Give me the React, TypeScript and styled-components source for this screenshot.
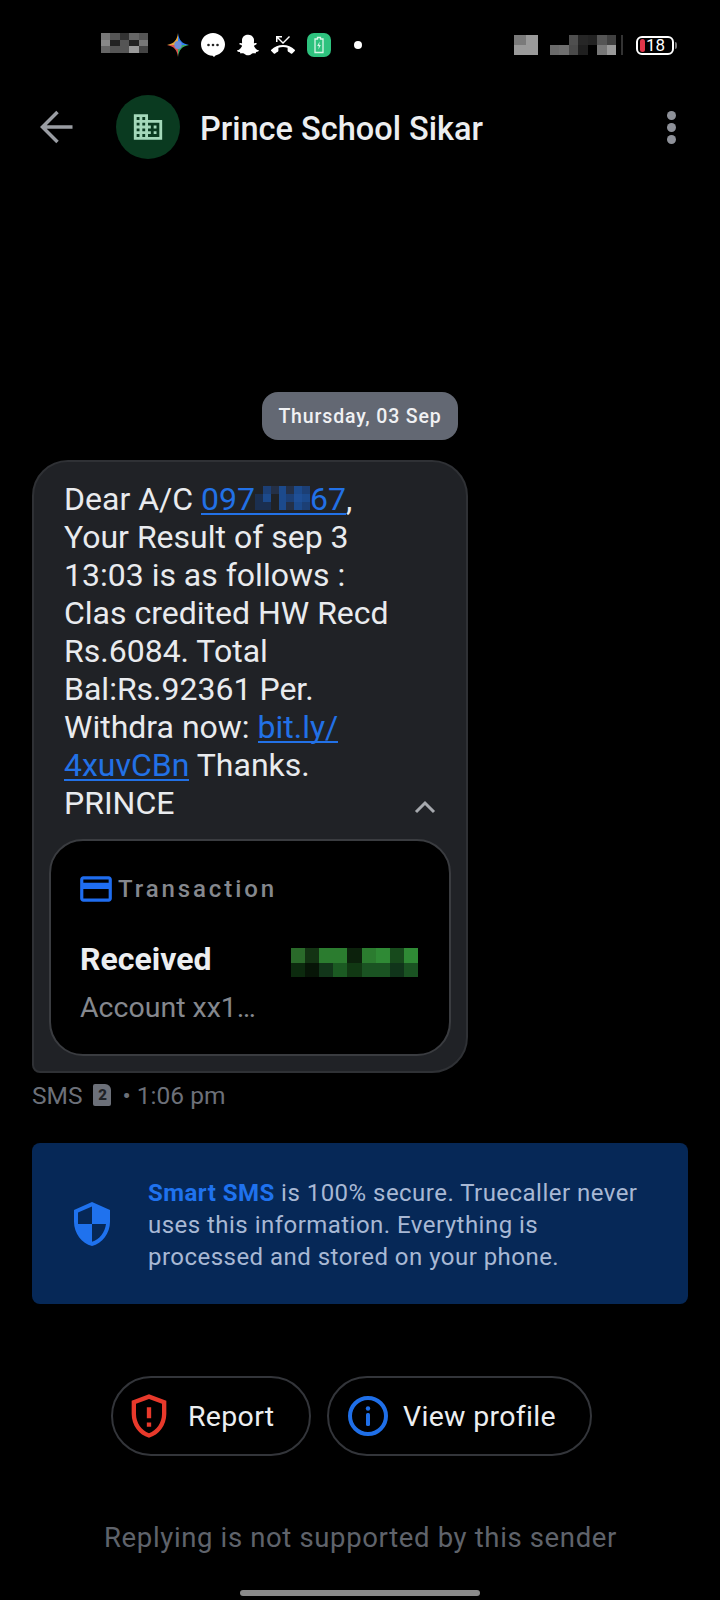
import React from 'react';
import { createGlobalStyle, styled } from 'styled-components';
import { FaSnapchatGhost } from 'react-icons/fa';

const GlobalStyle = createGlobalStyle`
  html, body {
    margin: 0;
    padding: 0;
    background: #000;
  }
  body {
    font-family: Roboto, "Liberation Sans", sans-serif;
  }
`;

const Screen = styled.div`
  width: 720px;
  height: 1600px;
  background: #000;
  display: flex;
  flex-direction: column;
  overflow: hidden;
  color: #e8eaed;
`;

const StatusBar = styled.div`
  height: 90px;
  box-sizing: border-box;
  padding: 33px 46px 0 101px;
  display: flex;
  align-items: flex-start;
`;

const StatusIcons = styled.div`
  display: flex;
  align-items: center;
  height: 24px;
  margin-left: 19px;
  gap: 12px;
`;

const StatusDot = styled.span`
  width: 8px;
  height: 8px;
  border-radius: 50%;
  background: #fff;
  margin-left: 11px;
`;

const StatusRight = styled.div`
  margin-left: auto;
  display: flex;
  align-items: center;
  height: 24px;
  gap: 12px;
`;

const SignalGroup = styled.div`
  display: flex;
  align-items: center;
`;

const SignalDivider = styled.span`
  width: 2px;
  height: 20px;
  background: #333;
  margin: 0 1px 0 5px;
`;

const BatteryShell = styled.div`
  position: relative;
  width: 38px;
  height: 19px;
  box-sizing: border-box;
  border: 2px solid #fff;
  border-radius: 6px;
  display: flex;
  align-items: center;
  padding-left: 2px;
  gap: 1px;
  &::after {
    content: '';
    position: absolute;
    right: -5px;
    top: 4px;
    width: 2px;
    height: 7px;
    background: #777;
    border-radius: 0 2px 2px 0;
  }
`;

const BatteryLevel = styled.span`
  width: 5px;
  height: 13px;
  border-radius: 3px;
  background: #e0364a;
`;

const BatteryText = styled.span`
  font-size: 17px;
  line-height: 15px;
  color: #fff;
`;

const Header = styled.header`
  height: 74px;
  display: flex;
  align-items: center;
  padding: 0 44px 0 36px;
`;

const BackButton = styled.button`
  width: 40px;
  height: 40px;
  padding: 0;
  border: 0;
  background: none;
  color: #9a9da3;
  display: flex;
  align-items: center;
  justify-content: center;
`;

const Avatar = styled.div`
  width: 64px;
  height: 64px;
  margin-left: 40px;
  border-radius: 50%;
  background: #0a3a20;
  display: flex;
  align-items: center;
  justify-content: center;
  flex-shrink: 0;
`;

const Title = styled.h1`
  margin: 0 0 0 20px;
  padding-top: 3px;
  font-size: 32.5px;
  font-weight: 500;
  line-height: 40px;
  color: #eceef0;
  flex: 1;
`;

const MoreButton = styled.div`
  display: flex;
  flex-direction: column;
  gap: 3px;
`;

const MoreDot = styled.span`
  width: 9px;
  height: 9px;
  border-radius: 50%;
  background: #8e9199;
`;

const Thread = styled.main`
  flex: 1;
  display: flex;
  flex-direction: column;
  padding: 228px 32px 0;
`;

const DatePill = styled.div`
  align-self: center;
  height: 48px;
  box-sizing: border-box;
  padding: 0 16px;
  border-radius: 16px;
  background: #636873;
  color: #f0f1f3;
  font-size: 19.5px;
  font-weight: 500;
  letter-spacing: 0.85px;
  display: flex;
  align-items: center;
`;

const Bubble = styled.article`
  width: 436px;
  margin-top: 20px;
  box-sizing: border-box;
  padding: 18px 15px 15px;
  background: #202226;
  border: 2px solid #2f3135;
  border-radius: 36px 36px 36px 8px;
`;

const MessageRow = styled.div`
  display: flex;
  align-items: flex-end;
  padding-left: 15px;
`;

const MessageText = styled.p`
  margin: 0;
  width: 335px;
  font-size: 32px;
  line-height: 38px;
  color: #e9ebee;
`;

const MessageLink = styled.a`
  color: #2271e6;
  background: linear-gradient(#2271e6, #2271e6) no-repeat left calc(100% - 3px) / 100% 2px;
`;

const Chevron = styled.span`
  color: #a6a9ae;
  margin: 0 0 8px 14px;
  display: flex;
`;

const SmartCard = styled.section`
  margin-top: 17px;
  height: 217px;
  box-sizing: border-box;
  padding: 35px 31px 0 29px;
  background: #000;
  border: 2px solid #3a3c40;
  border-radius: 34px;
`;

const CardLabel = styled.div`
  display: flex;
  align-items: center;
  gap: 3px;
  margin-left: -3px;
  height: 26px;
  color: #85888e;
  font-size: 24px;
  font-weight: 500;
  letter-spacing: 2.9px;
`;

const CardRow = styled.div`
  margin-top: 39px;
  display: flex;
  align-items: center;
  justify-content: space-between;
  height: 36px;
`;

const CardTitle = styled.span`
  font-size: 32px;
  font-weight: 700;
  color: #eceef0;
`;

const AmountBlock = styled.div`
  margin-top: 6px;
  display: flex;
`;

const CardSubtitle = styled.div`
  margin-top: 13px;
  font-size: 28.5px;
  line-height: 36px;
  color: #85888e;
`;

const Meta = styled.div`
  margin-top: 7px;
  height: 30px;
  display: flex;
  align-items: center;
  gap: 11px;
  font-size: 24.5px;
  color: #6c7079;
`;

const SimBadge = styled.span`
  width: 18px;
  height: 22px;
  background: #6c7079;
  color: #202226;
  border-radius: 2px 6px 2px 2px;
  font-size: 15px;
  font-weight: 900;
  display: flex;
  align-items: center;
  justify-content: center;
`;

const InfoBanner = styled.aside`
  margin-top: 33px;
  height: 161px;
  box-sizing: border-box;
  padding: 0 30px 0 36px;
  border-radius: 8px;
  background: #062857;
  display: flex;
  align-items: center;
  gap: 32px;
`;

const BannerText = styled.p`
  margin: 0;
  padding-top: 3px;
  font-size: 24px;
  line-height: 32px;
  letter-spacing: 0.47px;
  color: #a8b8d4;
`;

const BannerAccent = styled.strong`
  color: #1f72ee;
  font-weight: 700;
`;

const Actions = styled.div`
  margin-top: 72px;
  padding-left: 79px;
  display: flex;
  gap: 16px;
`;

const ActionButton = styled.button<{ $width: number; $inset: number; $gap: number }>`
  width: ${p => p.$width}px;
  height: 80px;
  box-sizing: border-box;
  padding: 0 0 0 ${p => p.$inset}px;
  border: 2px solid #33353a;
  border-radius: 40px;
  background: none;
  color: #eceef0;
  font-family: inherit;
  font-size: 28.5px;
  letter-spacing: 0.3px;
  display: flex;
  align-items: center;
  gap: ${p => p.$gap}px;
`;

const ReplyHint = styled.div`
  margin-top: 64px;
  margin-left: 1px;
  text-align: center;
  font-size: 27.5px;
  line-height: 36px;
  letter-spacing: 0.64px;
  color: #5f636b;
`;

const HomeBar = styled.div`
  align-self: center;
  width: 240px;
  height: 6px;
  margin-bottom: 4px;
  border-radius: 3px;
  background: #8a8a8a;
`;

// Blocks out private values with a grid of flat colour cells
const Mosaic = ({ cells, size, cols }: { cells: string[]; size: [number, number]; cols: number }) => {
  const rows = Math.ceil(cells.length / cols);
  const w = size[0] / cols;
  const h = size[1] / rows;
  return (
    <svg width={size[0]} height={size[1]} style={{ display: 'inline-block', flexShrink: 0 }} shapeRendering="crispEdges">
      {cells.map((fill, i) => (
        <rect key={i} x={(i % cols) * w} y={Math.floor(i / cols) * h} width={w + 0.5} height={h + 0.5} fill={fill} />
      ))}
    </svg>
  );
};

const Gem = () => (
  <svg width="22" height="24" viewBox="0 0 24 24" preserveAspectRatio="none">
    <defs>
      <clipPath id="gem">
        <path d="M12 0C13 7 16 10.5 24 12 16 13.5 13 17 12 24 11 17 8 13.5 0 12 8 10.5 11 7 12 0Z" />
      </clipPath>
    </defs>
    <g clipPath="url(#gem)">
      <rect x="0" y="0" width="12" height="12" fill="#e8a83a" />
      <rect x="12" y="0" width="12" height="12" fill="#2f7ff5" />
      <rect x="0" y="12" width="12" height="12" fill="#e0524d" />
      <rect x="12" y="12" width="12" height="12" fill="#3aa864" />
      <circle cx="12" cy="12" r="4" fill="#6f8fd8" />
    </g>
  </svg>
);

const ChatBubble = () => (
  <svg width="24" height="24" viewBox="0 0 24 24">
    <path d="M12 0C18.6 0 24 5 24 11.3 24 17 20 21 14.5 22.6L13 24 11.6 22.8C5 22.4 0 17.6 0 11.3 0 5 5.4 0 12 0Z" fill="#fff" />
    <circle cx="7.5" cy="12" r="1.3" fill="#222" />
    <circle cx="12" cy="12" r="1.3" fill="#222" />
    <circle cx="16.5" cy="12" r="1.3" fill="#222" />
  </svg>
);

const MissedCall = () => (
  <svg width="24" height="24" viewBox="0 0 24 24" fill="#fff">
    <path d="M6.5 5.5L12 11l7-7-1-1-6 6-4.5-4.5H11V3H5v6h1.5V5.5zm17.21 11.17C20.66 13.78 16.54 12 12 12 7.46 12 3.34 13.78.29 16.67c-.18.18-.29.43-.29.71s.11.53.29.71l2.48 2.48c.18.18.43.29.71.29.27 0 .52-.11.7-.28.79-.74 1.69-1.36 2.66-1.85.33-.16.56-.5.56-.9v-3.1c1.45-.48 3-.73 4.6-.73s3.15.25 4.6.72v3.1c0 .39.23.74.56.9.98.49 1.87 1.12 2.67 1.85.18.18.43.28.7.28.28 0 .53-.11.71-.29l2.48-2.48c.18-.18.29-.43.29-.71s-.12-.52-.3-.7z" />
  </svg>
);

const ChargingBadge = () => (
  <svg width="24" height="24" viewBox="0 0 24 24">
    <rect width="24" height="24" rx="7" fill="#2ec27e" />
    <path d="M10.5 4.5h3v1.5h2.5v13.5H8V6h2.5Z" fill="none" stroke="#d8f5e6" strokeWidth="1.3" />
    <path d="M12.6 8.5 10.2 13h1.6l-.4 3.5 2.4-4.5h-1.6Z" fill="#d8f5e6" />
  </svg>
);

const BuildingIcon = () => (
  <svg width="34" height="34" viewBox="0 0 24 24" fill="#a4d8ba">
    <path d="M12 7V3H2v18h20V7H12zM6 19H4v-2h2v2zm0-4H4v-2h2v2zm0-4H4V9h2v2zm0-4H4V5h2v2zm4 12H8v-2h2v2zm0-4H8v-2h2v2zm0-4H8V9h2v2zm0-4H8V5h2v2zm10 12h-8v-2h2v-2h-2v-2h2v-2h-2V9h8v10zm-2-8h-2v2h2v-2zm0 4h-2v2h2v-2z" />
  </svg>
);

const CardIcon = () => (
  <svg width="38" height="38" viewBox="0 0 24 24" fill="#1f6df0">
    <path d="M20 4H4c-1.11 0-1.99.89-1.99 2L2 18c0 1.11.89 2 2 2h16c1.11 0 2-.89 2-2V6c0-1.11-.89-2-2-2zm0 14H4v-6h16v6zm0-10H4V6h16v2z" />
  </svg>
);

const SecureShield = () => (
  <svg width="48" height="48" viewBox="0 0 24 24" fill="#1f72ee" style={{ flexShrink: 0 }}>
    <path d="M12 1L3 5v6c0 5.55 3.84 10.74 9 12 5.16-1.26 9-6.45 9-12V5l-9-4zm0 10.99h7c-.53 4.12-3.28 7.79-7 8.94V12H5V6.3l7-3.11v8.8z" />
  </svg>
);

const ReportIcon = () => (
  <svg width="52" height="52" viewBox="0 0 24 24" fill="#e8392b" style={{ flexShrink: 0 }}>
    <path d="M12 2 4 5v6.09c0 5.05 3.41 9.76 8 10.91 4.59-1.15 8-5.86 8-10.91V5l-8-3zm6 9.09c0 4-2.55 7.7-6 8.83-3.45-1.13-6-4.82-6-8.83v-4.7l6-2.25 6 2.25v4.7zM11 15h2v2h-2zm0-7h2v5h-2z" />
  </svg>
);

const InfoIcon = () => (
  <svg width="42" height="42" viewBox="0 0 42 42" style={{ flexShrink: 0 }}>
    <circle cx="21" cy="21" r="18" fill="none" stroke="#1f6fe8" strokeWidth="4" />
    <circle cx="21" cy="13.5" r="2.2" fill="#1f6fe8" />
    <rect x="19" y="18" width="4" height="13" rx="1.5" fill="#1f6fe8" />
  </svg>
);

const leftBlocks = [
  '#777', '#555', '#333', '#666', '#555',
  '#888', '#222', '#555', '#222', '#777',
  '#666', '#555', '#555', '#999', '#444',
];
const simBlocks = ['#7a7a7a', '#9a9a9a', '#9a9a9a', '#9a9a9a'];
const signalBlocks = [
  '#000', '#000', '#4f4f4f', '#262626', '#222', '#555', '#404040',
  '#6a6a6a', '#6f6f6f', '#4a4a4a', '#1f1f1f', '#000', '#777', '#999',
];
const amountBlocks = [
  '#2a6a2a', '#133313', '#2b7c2f', '#2b7c2f', '#0c210c', '#2b7c2f', '#2f8a35', '#174a1c', '#2f8a35',
  '#0c2a0e', '#071507', '#12361a', '#1b5a22', '#113813', '#1a5322', '#1a5322', '#10341a', '#1a5322',
];
const accountBlocks = [
  '#202226', '#1c3f75', '#243047', '#1c4a8c', '#243047', '#1c4a8c', '#1c3f75',
  '#1b2f50', '#1c4a8c', '#202226', '#1c4a8c', '#1c3f75', '#1f4f96', '#1c4a8c',
  '#1b2f50', '#1b2f50', '#202226', '#1c4a8c', '#243047', '#1c4a8c', '#1c3f75',
];

export default function App() {
  return (
    <Screen>
      <GlobalStyle />
      <StatusBar>
        <Mosaic cells={leftBlocks} size={[47, 20]} cols={5} />
        <StatusIcons>
          <Gem />
          <ChatBubble />
          <FaSnapchatGhost size={22} color="#fff" />
          <MissedCall />
          <ChargingBadge />
          <StatusDot />
        </StatusIcons>
        <StatusRight>
          <Mosaic cells={simBlocks} size={[24, 20]} cols={2} />
          <SignalGroup>
            <Mosaic cells={signalBlocks} size={[66, 20]} cols={7} />
            <SignalDivider />
          </SignalGroup>
          <BatteryShell>
            <BatteryLevel />
            <BatteryText>18</BatteryText>
          </BatteryShell>
        </StatusRight>
      </StatusBar>

      <Header>
        <BackButton aria-label="Back">
          <svg width="36" height="36" viewBox="0 0 36 36" fill="none" stroke="currentColor" strokeWidth="3.5">
            <path d="M34.5 18H5M19.5 3 4.5 18l15 15" />
          </svg>
        </BackButton>
        <Avatar>
          <BuildingIcon />
        </Avatar>
        <Title>Prince School Sikar</Title>
        <MoreButton>
          <MoreDot />
          <MoreDot />
          <MoreDot />
        </MoreButton>
      </Header>

      <Thread>
        <DatePill>Thursday, 03 Sep</DatePill>
        <Bubble>
          <MessageRow>
            <MessageText>
              Dear A/C{' '}
              <MessageLink>
                097
                <Mosaic cells={accountBlocks} size={[55, 24]} cols={7} />
                67
              </MessageLink>
              , Your Result of sep 3 13:03 is as follows : Clas credited HW Recd Rs.6084. Total Bal:Rs.92361 Per. Withdra
              now: <MessageLink>bit.ly/ 4xuvCBn</MessageLink> Thanks. PRINCE
            </MessageText>
            <Chevron>
              <svg width="24" height="16" viewBox="0 0 24 16" fill="none" stroke="currentColor" strokeWidth="3">
                <path d="M3 14 12 5l9 9" />
              </svg>
            </Chevron>
          </MessageRow>
          <SmartCard>
            <CardLabel>
              <CardIcon />
              Transaction
            </CardLabel>
            <CardRow>
              <CardTitle>Received</CardTitle>
              <AmountBlock>
                <Mosaic cells={amountBlocks} size={[127, 29]} cols={9} />
              </AmountBlock>
            </CardRow>
            <CardSubtitle>Account xx1…</CardSubtitle>
          </SmartCard>
        </Bubble>
        <Meta>
          SMS
          <SimBadge>2</SimBadge>• 1:06 pm
        </Meta>

        <InfoBanner>
          <SecureShield />
          <BannerText>
            <BannerAccent>Smart SMS</BannerAccent> is 100% secure. Truecaller never uses this information. Everything is
            processed and stored on your phone.
          </BannerText>
        </InfoBanner>

        <Actions>
          <ActionButton $width={200} $inset={10} $gap={13}>
            <ReportIcon />
            Report
          </ActionButton>
          <ActionButton $width={265} $inset={18} $gap={14}>
            <InfoIcon />
            View profile
          </ActionButton>
        </Actions>

        <ReplyHint>Replying is not supported by this sender</ReplyHint>
      </Thread>
      <HomeBar />
    </Screen>
  );
}
